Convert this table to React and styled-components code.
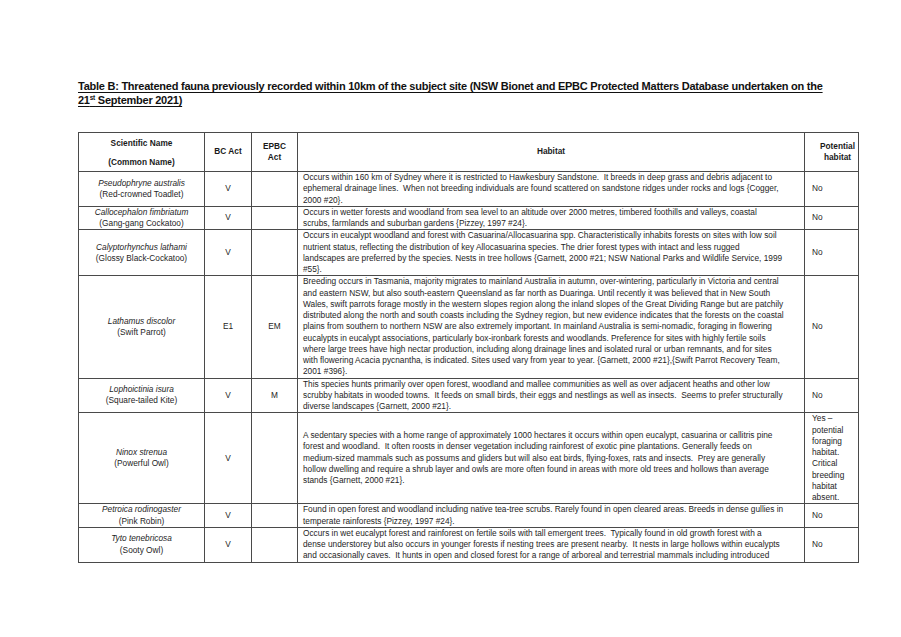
import React from 'react'
import styled, { createGlobalStyle } from 'styled-components'

const GlobalStyle = createGlobalStyle`
    html, body {
        margin: 0;
        padding: 0;
        background: #ffffff;
    }
`

const rows = [
    {
        sci: 'Pseudophryne australis',
        common: '(Red-crowned Toadlet)',
        bc: 'V',
        epbc: '',
        habitat: [
            'Occurs within 160 km of Sydney where it is restricted to Hawkesbury Sandstone.  It breeds in deep grass and debris adjacent to',
            'ephemeral drainage lines.  When not breeding individuals are found scattered on sandstone ridges under rocks and logs {Cogger,',
            '2000 #20}.',
        ],
        potential: ['No'],
    },
    {
        sci: 'Callocephalon fimbriatum',
        common: '(Gang-gang Cockatoo)',
        bc: 'V',
        epbc: '',
        habitat: [
            'Occurs in wetter forests and woodland from sea level to an altitude over 2000 metres, timbered foothills and valleys, coastal',
            'scrubs, farmlands and suburban gardens {Pizzey, 1997 #24}.',
        ],
        potential: ['No'],
    },
    {
        sci: 'Calyptorhynchus lathami',
        common: '(Glossy Black-Cockatoo)',
        bc: 'V',
        epbc: '',
        habitat: [
            'Occurs in eucalypt woodland and forest with Casuarina/Allocasuarina spp. Characteristically inhabits forests on sites with low soil',
            'nutrient status, reflecting the distribution of key Allocasuarina species. The drier forest types with intact and less rugged',
            'landscapes are preferred by the species. Nests in tree hollows {Garnett, 2000 #21; NSW National Parks and Wildlife Service, 1999',
            '#55}.',
        ],
        potential: ['No'],
    },
    {
        sci: 'Lathamus discolor',
        common: '(Swift Parrot)',
        bc: 'E1',
        epbc: 'EM',
        habitat: [
            'Breeding occurs in Tasmania, majority migrates to mainland Australia in autumn, over-wintering, particularly in Victoria and central',
            'and eastern NSW, but also south-eastern Queensland as far north as Duaringa. Until recently it was believed that in New South',
            'Wales, swift parrots forage mostly in the western slopes region along the inland slopes of the Great Dividing Range but are patchily',
            'distributed along the north and south coasts including the Sydney region, but new evidence indicates that the forests on the coastal',
            'plains from southern to northern NSW are also extremely important. In mainland Australia is semi-nomadic, foraging in flowering',
            'eucalypts in eucalypt associations, particularly box-ironbark forests and woodlands. Preference for sites with highly fertile soils',
            'where large trees have high nectar production, including along drainage lines and isolated rural or urban remnants, and for sites',
            'with flowering Acacia pycnantha, is indicated. Sites used vary from year to year. {Garnett, 2000 #21},{Swift Parrot Recovery Team,',
            '2001 #396}.',
        ],
        potential: ['No'],
    },
    {
        sci: 'Lophoictinia isura',
        common: '(Square-tailed Kite)',
        bc: 'V',
        epbc: 'M',
        habitat: [
            'This species hunts primarily over open forest, woodland and mallee communities as well as over adjacent heaths and other low',
            'scrubby habitats in wooded towns.  It feeds on small birds, their eggs and nestlings as well as insects.  Seems to prefer structurally',
            'diverse landscapes {Garnett, 2000 #21}.',
        ],
        potential: ['No'],
    },
    {
        sci: 'Ninox strenua',
        common: '(Powerful Owl)',
        bc: 'V',
        epbc: '',
        habitat: [
            'A sedentary species with a home range of approximately 1000 hectares it occurs within open eucalypt, casuarina or callitris pine',
            'forest and woodland.  It often roosts in denser vegetation including rainforest of exotic pine plantations. Generally feeds on',
            'medium-sized mammals such as possums and gliders but will also eat birds, flying-foxes, rats and insects.  Prey are generally',
            'hollow dwelling and require a shrub layer and owls are more often found in areas with more old trees and hollows than average',
            'stands {Garnett, 2000 #21}.',
        ],
        potential: ['Yes \u2013', 'potential', 'foraging', 'habitat.', 'Critical', 'breeding', 'habitat', 'absent.'],
    },
    {
        sci: 'Petroica rodinogaster',
        common: '(Pink Robin)',
        bc: 'V',
        epbc: '',
        habitat: [
            'Found in open forest and woodland including native tea-tree scrubs. Rarely found in open cleared areas. Breeds in dense gullies in',
            'temperate rainforests {Pizzey, 1997 #24}.',
        ],
        potential: ['No'],
    },
    {
        sci: 'Tyto tenebricosa',
        common: '(Sooty Owl)',
        bc: 'V',
        epbc: '',
        habitat: [
            'Occurs in wet eucalypt forest and rainforest on fertile soils with tall emergent trees.  Typically found in old growth forest with a',
            'dense understorey but also occurs in younger forests if nesting trees are present nearby.  It nests in large hollows within eucalypts',
            'and occasionally caves.  It hunts in open and closed forest for a range of arboreal and terrestrial mammals including introduced',
        ],
        potential: ['No'],
    },
]

export default function App() {
    return (
        <Page>
            <GlobalStyle />
            <Title>
                Table B: Threatened fauna previously recorded within 10km of the subject site (NSW Bionet and EPBC Protected Matters Database undertaken on the
                <br />
                21<sup>st</sup> September 2021)
            </Title>
            <Table>
                <colgroup>
                    <col style={{ width: 126 }} />
                    <col style={{ width: 47 }} />
                    <col style={{ width: 46 }} />
                    <col style={{ width: 507 }} />
                    <col style={{ width: 54 }} />
                </colgroup>
                <thead>
                    <tr>
                        <HeadCell $stack>
                            <span>Scientific Name</span>
                            <span>(Common Name)</span>
                        </HeadCell>
                        <HeadCell>BC Act</HeadCell>
                        <HeadCell>EPBC<br />Act</HeadCell>
                        <HeadCell>Habitat</HeadCell>
                        <HeadCell $last>Potential<br />habitat</HeadCell>
                    </tr>
                </thead>
                <tbody>
                    {rows.map((r) => (
                        <tr key={r.sci}>
                            <Cell $align="center">
                                <Species>{r.sci}</Species>
                                <br />
                                {r.common}
                            </Cell>
                            <Cell $align="center">{r.bc}</Cell>
                            <Cell $align="center">{r.epbc}</Cell>
                            <Cell>
                                {r.habitat.map((line, i) => (
                                    <Line key={i}>{line}</Line>
                                ))}
                            </Cell>
                            <Cell $pad={7}>
                                {r.potential.map((line, i) => (
                                    <Line key={i}>{line}</Line>
                                ))}
                            </Cell>
                        </tr>
                    ))}
                </tbody>
            </Table>
        </Page>
    )
}

const Page = styled.div`
    width: 901px;
    min-height: 637px;
    box-sizing: border-box;
    padding: 79px 0 0 78px;
    font-family: "Liberation Sans", Arial, sans-serif;
    color: #1e1e1e;
`

const Title = styled.h1`
    margin: 0 0 25px 0;
    font-family: "Liberation Sans", Arial, sans-serif;
    font-size: 11px;
    line-height: 14px;
    font-weight: bold;
    letter-spacing: -0.25px;
    white-space: nowrap;
    text-decoration: underline;
    text-underline-offset: 1.5px;
    color: #111;

    sup {
        font-size: 6.5px;
        line-height: 0;
        vertical-align: 4px;
    }
`

const Table = styled.table`
    border-collapse: collapse;
    table-layout: fixed;
    width: 781px;
    font-size: 8.3px;
    line-height: 11.25px;
    border: 1.5px solid #3a3a3a;
`

const HeadCell = styled.th`
    height: 34px;
    padding: ${(p) => (p.$stack ? '3px 4px 1px' : p.$last ? '0 0 0 12px' : '0 4px')};
    border: 1px solid #4a4a4a;
    font-weight: bold;
    text-align: center;
    vertical-align: middle;
    color: #1a1a1a;

    ${(p) =>
        p.$stack &&
        `
        span { display: block; }
        span + span { margin-top: 8px; }
    `}
`

const Cell = styled.td`
    padding: 0 ${(p) => (p.$pad ? `${p.$pad}px` : '5px')};
    border: 1px solid #4a4a4a;
    text-align: ${(p) => p.$align || 'left'};
    vertical-align: middle;
`

const Line = styled.div`
    white-space: pre;
`

const Species = styled.i`
    font-style: italic;
`
